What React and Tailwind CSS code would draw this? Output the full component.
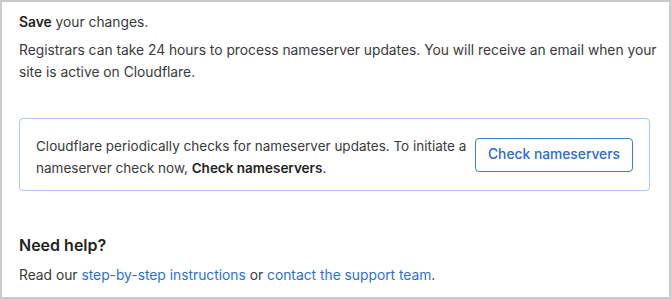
export default function App() {
  return (
    <div className="h-[299px] w-[671px] bg-white border-2 border-[#cbcbcb] font-['Inter',sans-serif] text-[13.8px] text-[#3a3a3a]">
      <div className="pl-[17px] pr-[6px] pt-[9px]">
        <p className="leading-[22px]">
          <span className="font-semibold text-[#1f1f1f]">Save</span> your changes.
        </p>
        <p className="mt-[6px] leading-[22px]">
          Registrars can take 24 hours to process nameserver updates. You will receive an email when your site is active on Cloudflare.
        </p>

        <div className="mt-[35px] mr-[13px] flex h-[73px] items-center justify-between rounded-[4px] border border-[#a9c9f7] pl-[16px] pr-[16px]">
          <p className="mt-[5px] w-[436px] text-[13.5px] leading-[22px]">
            Cloudflare periodically checks for nameserver updates. To initiate a nameserver check now,{' '}
            <span className="font-semibold text-[#1f1f1f]">Check nameservers</span>.
          </p>
          <button className="h-[34px] w-[158px] shrink-0 rounded-[4px] border border-[#3d7be0] text-[#2a6bd6] font-medium">
            Check nameservers
          </button>
        </div>

        <h2 className="mt-[43px] text-[16px] font-semibold leading-[22px] text-[#1f1f1f]">Need help?</h2>
        <p className="mt-[8px] leading-[22px]">
          Read our <a className="text-[#2b6fd6]">step-by-step instructions</a> or{' '}
          <a className="text-[#2b6fd6]">contact the support team</a>.
        </p>
      </div>
    </div>
  );
}
